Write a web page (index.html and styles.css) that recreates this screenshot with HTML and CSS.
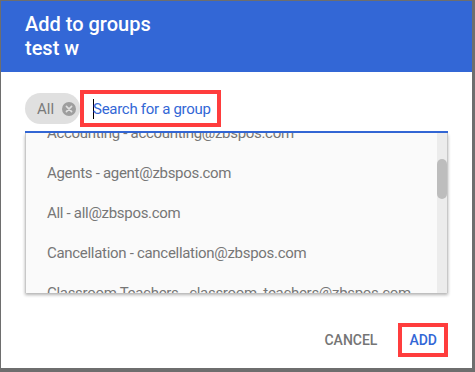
FILE: index.html
```html
<!DOCTYPE html>
<html>
<head>
<meta charset="utf-8">
<link rel="stylesheet" href="styles.css">
</head>
<body>
<div class="dialog">
  <header class="head">
    <div class="title">Add to groups</div>
    <div class="title">test w</div>
  </header>
  <div class="body">
    <div class="chips">
      <span class="chip">
        <span class="chip-label">All</span>
        <svg class="chip-x" viewBox="0 0 14 14" width="14" height="14">
          <circle cx="7" cy="7" r="7" fill="#9e9e9e"/>
          <path d="M4.4 4.4 L9.6 9.6 M9.6 4.4 L4.4 9.6" stroke="#e0e0e0" stroke-width="1.6" stroke-linecap="round"/>
        </svg>
      </span>
      <div class="search hl"><span class="caret"></span><span class="ph">Search for a group</span></div>
    </div>
    <div class="list">
      <ul class="items">
        <li>Accounting - accounting@zbspos.com</li>
        <li>Agents - agent@zbspos.com</li>
        <li>All - all@zbspos.com</li>
        <li>Cancellation - cancellation@zbspos.com</li>
        <li>Classroom Teachers - classroom_teachers@zbspos.com</li>
      </ul>
      <div class="track"><div class="thumb"></div></div>
    </div>
  </div>
  <footer class="actions">
    <button class="btn cancel">Cancel</button>
    <button class="btn add hl">Add</button>
  </footer>
</div>
</body>
</html>
```
FILE: styles.css
```css
html, body {
  margin: 0;
  padding: 0;
}
body {
  background: #6e6e6e;
  font-family: Roboto, "Liberation Sans", sans-serif;
  width: 475px;
  height: 372px;
  overflow: hidden;
}
.dialog {
  margin: 1px 0 0 1px;
  width: 471px;
  height: 367px;
  background: #fff;
  display: flex;
  flex-direction: column;
}
.head {
  background: #3367d6;
  color: #fff;
  padding: 11px 24px 12px;
  font-weight: 500;
  font-size: 20px;
  line-height: 24px;
}
.body {
  padding: 0 24px;
}
.chips {
  margin-top: 18px;
  display: flex;
  align-items: center;
  padding-bottom: 4px;
  border-bottom: 2px solid #3367d6;
}
.chip {
  display: flex;
  align-items: center;
  height: 31px;
  box-sizing: border-box;
  border-radius: 16px;
  background: #e0e0e0;
  padding: 0 4px 0 12px;
  gap: 8px;
  color: #7a7a7a;
  font-size: 15px;
}
.chip-x {
  display: block;
}
.search {
  display: flex;
  align-items: center;
  box-sizing: border-box;
  width: 141px;
  height: 37px;
  padding-left: 9px;
  color: #3367d6;
  font-size: 15px;
  letter-spacing: -0.3px;
  white-space: nowrap;
  overflow: hidden;
  background: #fff;
}
.hl {
  border: 4px solid #ff3d3d;
}
.caret {
  flex: none;
  width: 1px;
  height: 20px;
  background: #000;
  margin-right: -1px;
}
.list {
  display: flex;
  height: 160px;
  background: #fafafa;
  border-left: 1px solid #c8c8c8;
  box-shadow: 0 2px 3px rgba(0,0,0,0.3);
}
.items {
  flex: 1;
  min-width: 0;
  margin: 0;
  padding: 0;
  list-style: none;
  overflow: hidden;
}
.items li {
  height: 40px;
  line-height: 40px;
  padding-left: 21px;
  font-size: 15px;
  letter-spacing: -0.3px;
  color: #767676;
  white-space: nowrap;
}
.items li:first-child {
  margin-top: -20px;
}
.track {
  flex: none;
  width: 10px;
  background: #ececec;
  border-right: 1px solid #c8c8c8;
}
.thumb {
  margin-top: 26px;
  height: 40px;
  border-radius: 5px;
  background: #bdbdbd;
}
.actions {
  margin-top: auto;
  display: flex;
  justify-content: flex-end;
  align-items: center;
  gap: 13px;
  padding: 0 24px 11px;
}
.btn {
  font-family: Roboto, "Liberation Sans", sans-serif;
  font-weight: 500;
  font-size: 14px;
  text-transform: uppercase;
  background: none;
  border: none;
  padding: 0 8px;
  height: 34px;
  cursor: pointer;
}
.cancel {
  color: #757575;
}
.add {
  color: #3367d6;
  padding: 0 7px;
  border: 4px solid #ff3d3d;
}
```
